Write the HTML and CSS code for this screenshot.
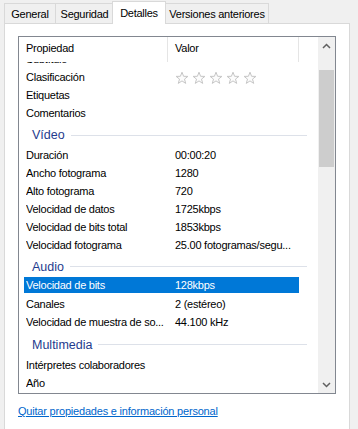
FILE: index.html
```html
<!DOCTYPE html>
<html lang="es">
<head>
    <meta charset="UTF-8">
    <title>Propiedades - Detalles</title>
    <link rel="stylesheet" href="styles.css">
</head>
<body>
    <!-- Tabs -->
    <ul class="tabs">
        <li class="tab t-general">General</li>
        <li class="tab t-security">Seguridad</li>
        <li class="tab t-details active">Detalles</li>
        <li class="tab t-versions">Versiones anteriores</li>
    </ul>

    <!-- Tab panel -->
    <div class="panel">
        <div class="listview">
            <div class="list-main">
                <div class="list-header">
                    <div class="col-name">Propiedad</div>
                    <div class="col-value">Valor</div>
                    <div class="col-rest"></div>
                </div>
                <div class="list-body">
                    <div class="rows">
                        <div class="row"><span class="name">Subtítulo</span><span class="value"></span></div>
                        <div class="row">
                            <span class="name">Clasificación</span>
                            <span class="value stars">
                                <svg class="star" viewBox="0 0 14 14"><path d="M7 1.2 8.6 5.3 12.9 5.4 9.5 8.1 10.7 12.4 7 9.9 3.3 12.4 4.5 8.1 1.1 5.4 5.4 5.3Z"/></svg>
                                <svg class="star" viewBox="0 0 14 14"><path d="M7 1.2 8.6 5.3 12.9 5.4 9.5 8.1 10.7 12.4 7 9.9 3.3 12.4 4.5 8.1 1.1 5.4 5.4 5.3Z"/></svg>
                                <svg class="star" viewBox="0 0 14 14"><path d="M7 1.2 8.6 5.3 12.9 5.4 9.5 8.1 10.7 12.4 7 9.9 3.3 12.4 4.5 8.1 1.1 5.4 5.4 5.3Z"/></svg>
                                <svg class="star" viewBox="0 0 14 14"><path d="M7 1.2 8.6 5.3 12.9 5.4 9.5 8.1 10.7 12.4 7 9.9 3.3 12.4 4.5 8.1 1.1 5.4 5.4 5.3Z"/></svg>
                                <svg class="star" viewBox="0 0 14 14"><path d="M7 1.2 8.6 5.3 12.9 5.4 9.5 8.1 10.7 12.4 7 9.9 3.3 12.4 4.5 8.1 1.1 5.4 5.4 5.3Z"/></svg>
                            </span>
                        </div>
                        <div class="row"><span class="name">Etiquetas</span><span class="value"></span></div>
                        <div class="row"><span class="name">Comentarios</span><span class="value"></span></div>

                        <div class="group g-video"><span class="group-title">Vídeo</span><span class="group-line"></span></div>
                        <div class="row"><span class="name">Duración</span><span class="value">00:00:20</span></div>
                        <div class="row"><span class="name">Ancho fotograma</span><span class="value">1280</span></div>
                        <div class="row"><span class="name">Alto fotograma</span><span class="value">720</span></div>
                        <div class="row"><span class="name">Velocidad de datos</span><span class="value">1725kbps</span></div>
                        <div class="row"><span class="name">Velocidad de bits total</span><span class="value">1853kbps</span></div>
                        <div class="row"><span class="name">Velocidad fotograma</span><span class="value">25.00 fotogramas/segu...</span></div>

                        <div class="group g-audio"><span class="group-title">Audio</span><span class="group-line"></span></div>
                        <div class="row selected">
                            <div class="highlight"><span class="name">Velocidad de bits</span><span class="value">128kbps</span></div>
                        </div>
                        <div class="row"><span class="name">Canales</span><span class="value">2 (estéreo)</span></div>
                        <div class="row"><span class="name">Velocidad de muestra de so...</span><span class="value">44.100 kHz</span></div>

                        <div class="group g-media"><span class="group-title">Multimedia</span><span class="group-line"></span></div>
                        <div class="row"><span class="name">Intérpretes colaboradores</span><span class="value"></span></div>
                        <div class="row"><span class="name">Año</span><span class="value"></span></div>
                    </div>
                </div>
            </div>

            <!-- Vertical scrollbar -->
            <div class="scrollbar">
                <div class="arrow">
                    <svg viewBox="0 0 9 6"><path d="M1 5 4.5 1.5 8 5"/></svg>
                </div>
                <div class="track">
                    <div class="thumb"></div>
                </div>
                <div class="arrow">
                    <svg viewBox="0 0 9 6"><path d="M1 1 4.5 4.5 8 1"/></svg>
                </div>
            </div>
        </div>

        <a class="remove-link" href="#">Quitar propiedades e información personal</a>
    </div>
</body>
</html>
```

FILE: styles.css
```css
/* Reset and base styles */
* {
    box-sizing: border-box;
    margin: 0;
    padding: 0;
}

body {
    font-family: "Liberation Sans", Arial, sans-serif;
    font-size: 11px;
    letter-spacing: -0.25px;
    color: #000;
    background: #f0f0f0;
    overflow: hidden;
}

/* Tabs */
.tabs {
    display: flex;
    align-items: flex-end;
    list-style: none;
    height: 24px;
    padding-left: 4px;
    position: relative;
    z-index: 1;
}

.tab {
    height: 20px;
    line-height: 20px;
    margin-bottom: 1px;
    margin-right: -1px;
    border: 1px solid #d9d9d9;
    border-bottom: none;
    background: #f0f0f0;
    text-align: center;
    white-space: nowrap;
}

.t-general { width: 52px; }
.t-security { width: 59px; }
.t-details { width: 54px; }
.t-versions { width: 104px; }

.tab.active {
    height: 23px;
    line-height: 22px;
    margin: 0 -1px 0 -1px;
    background: #fff;
    position: relative;
    z-index: 2;
}

/* Panel */
.panel {
    margin: -1px 8px 0 4px;
    height: 420px;
    background: #fff;
    border: 1px solid #d9d9d9;
    padding: 12px 0 0 13px;
}

/* List view */
.listview {
    display: flex;
    width: 318px;
    height: 358px;
    border: 1px solid #828790;
    background: #fff;
}

.list-main {
    flex: 1;
    display: flex;
    flex-direction: column;
    min-width: 0;
}

.list-header {
    display: flex;
    height: 25px;
    flex-shrink: 0;
    background: #fff;
    position: relative;
    z-index: 1;
}

.list-header div {
    padding: 5px 0 0 7px;
    border-right: 1px solid #e5e5e5;
}

.list-header .col-name {
    width: 149px;
}

.list-header .col-value {
    width: 131px;
}

.list-header .col-rest {
    flex: 1;
    border-right: none;
}

.list-body {
    flex: 1;
    overflow: hidden;
}

/* first row is scrolled half under the header */
.rows {
    margin-top: -12px;
}

.row {
    display: flex;
    height: 18px;
    line-height: 18px;
    margin-left: 5px;
    width: 275px;
    padding-left: 2px;
    white-space: nowrap;
}

.row .name {
    width: 149px;
    overflow: hidden;
}

.row .value {
    flex: 1;
}

.row.selected {
    padding-left: 0;
}

.highlight {
    display: flex;
    width: 275px;
    height: 16px;
    line-height: 16px;
    padding-left: 2px;
    background: #0078d7;
    color: #fff;
}

/* Rating stars */
.stars {
    display: flex;
    align-items: center;
    gap: 3px;
    padding-top: 1px;
}

.star {
    width: 14px;
    height: 14px;
    fill: #fcfcfc;
    stroke: #c6c6c6;
    stroke-width: 1;
    stroke-linejoin: round;
}

/* Group headings */
.group {
    display: flex;
    align-items: center;
    padding: 2px 11px 0 13px;
    font-size: 12.5px;
    letter-spacing: 0;
    color: #1e3b8e;
}

.g-video {
    height: 24px;
}

.g-audio {
    height: 23px;
}

.g-media {
    height: 25px;
}

.group-line {
    flex: 1;
    height: 1px;
    margin-left: 6px;
    background: #dde1e9;
}

/* Scrollbar */
.scrollbar {
    width: 17px;
    display: flex;
    flex-direction: column;
    background: #f0f0f0;
}

.arrow {
    height: 17px;
    display: flex;
    align-items: center;
    justify-content: center;
}

.arrow svg {
    width: 9px;
    height: 6px;
    fill: none;
    stroke: #606060;
    stroke-width: 1.5;
}

.track {
    flex: 1;
    padding-top: 16px;
}

.thumb {
    height: 97px;
    margin: 0 1px;
    background: #cdcdcd;
}

/* Link */
.remove-link {
    display: inline-block;
    margin-top: 11px;
    color: #0066cc;
    text-decoration: underline;
    letter-spacing: -0.2px;
}
```
